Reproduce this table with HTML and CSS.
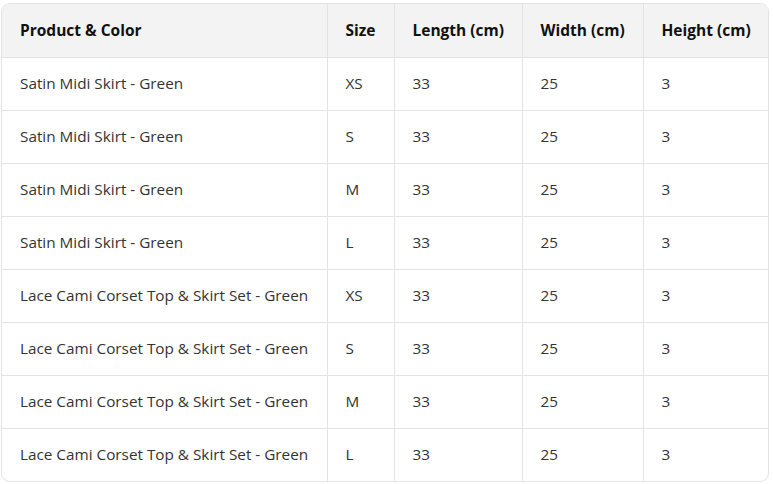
FILE: index.html
```html
<!DOCTYPE html>
<html>
<head>
<meta charset="utf-8">
<link rel="stylesheet" href="styles.css">
</head>
<body>
<div class="wrap">
<table class="tbl">
<colgroup>
<col class="c1"><col class="c2"><col class="c3"><col class="c4"><col class="c5">
</colgroup>
<thead>
<tr><th>Product &amp; Color</th><th>Size</th><th>Length (cm)</th><th>Width (cm)</th><th>Height (cm)</th></tr>
</thead>
<tbody>
<tr><td>Satin Midi Skirt - Green</td><td>XS</td><td>33</td><td>25</td><td>3</td></tr>
<tr><td>Satin Midi Skirt - Green</td><td>S</td><td>33</td><td>25</td><td>3</td></tr>
<tr><td>Satin Midi Skirt - Green</td><td>M</td><td>33</td><td>25</td><td>3</td></tr>
<tr><td>Satin Midi Skirt - Green</td><td>L</td><td>33</td><td>25</td><td>3</td></tr>
<tr><td>Lace Cami Corset Top &amp; Skirt Set - Green</td><td>XS</td><td>33</td><td>25</td><td>3</td></tr>
<tr><td>Lace Cami Corset Top &amp; Skirt Set - Green</td><td>S</td><td>33</td><td>25</td><td>3</td></tr>
<tr><td>Lace Cami Corset Top &amp; Skirt Set - Green</td><td>M</td><td>33</td><td>25</td><td>3</td></tr>
<tr><td>Lace Cami Corset Top &amp; Skirt Set - Green</td><td>L</td><td>33</td><td>25</td><td>3</td></tr>
</tbody>
</table>
</div>
</body>
</html>
```
FILE: styles.css
```css
html, body { margin: 0; padding: 0; background: #fff; }
body { padding: 3px 4px 3px 1px; font-family: "Open Sans", "Noto Sans", sans-serif; }
.wrap {
  width: 768px;
  border: 1px solid #e3e3e3;
  border-radius: 9px;
  overflow: hidden;
  box-sizing: border-box;
}
.tbl { width: 100%; border-collapse: collapse; table-layout: fixed; }
.c1 { width: 325px; } .c2 { width: 67px; } .c3 { width: 128px; } .c4 { width: 121px; } .c5 { width: auto; }
.tbl th, .tbl td {
  text-align: left;
  padding: 0 0 2px 18px;
  border-left: 1px solid #e3e3e3;
  border-top: 1px solid #e3e3e3;
  white-space: nowrap;
}
.tbl th:first-child, .tbl td:first-child { border-left: none; }
.tbl thead th { border-top: none; }
.tbl th {
  height: 51px;
  background: #f3f3f3;
  font-weight: 700;
  font-size: 15.5px;
  color: #111;
}
.tbl td {
  height: 50px;
  font-size: 15.3px;
  color: #333;
}
```
